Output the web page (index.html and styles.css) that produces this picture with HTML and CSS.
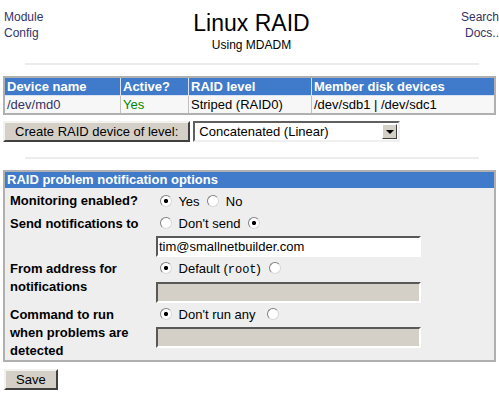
FILE: index.html
```html
<!DOCTYPE html>
<html lang="en">
<head>
    <meta charset="UTF-8">
    <title>Linux RAID</title>
    <link rel="stylesheet" href="styles.css">
</head>
<body>
    <div class="header">
        <div class="links-left">
            <a href="#">Module<br>Config</a>
        </div>
        <div class="title">
            <h1>Linux RAID</h1>
            <div class="subtitle">Using MDADM</div>
        </div>
        <div class="links-right">
            <a href="#">Search<br>Docs..</a>
        </div>
    </div>
    <hr>

    <table class="devices">
        <tr class="head">
            <td class="c1">Device name</td>
            <td class="c2">Active?</td>
            <td class="c3">RAID level</td>
            <td class="c4">Member disk devices</td>
        </tr>
        <tr class="row">
            <td><a href="#">/dev/md0</a></td>
            <td class="yes">Yes</td>
            <td>Striped (RAID0)</td>
            <td>/dev/sdb1 | /dev/sdc1</td>
        </tr>
    </table>

    <form class="create">
        <button type="button" class="btn">Create RAID device of level:</button>
        <div class="select">
            <span class="select-text">Concatenated (Linear)</span>
            <span class="select-arrow"><span class="tri"></span></span>
        </div>
    </form>
    <hr class="hr2">

    <table class="options">
        <tr class="head">
            <td colspan="2">RAID problem notification options</td>
        </tr>
        <tr class="first">
            <td class="label">Monitoring enabled?</td>
            <td class="field">
                <span class="radio on"></span> Yes <span class="radio"></span> No
            </td>
        </tr>
        <tr>
            <td class="label">Send notifications to</td>
            <td class="field">
                <span class="radio"></span> Don't send <span class="radio on"></span>
                <div class="text">tim@smallnetbuilder.com</div>
            </td>
        </tr>
        <tr>
            <td class="label">From address for notifications</td>
            <td class="field">
                <span class="radio on"></span> Default (<code>root</code>) <span class="radio"></span>
                <div class="text off"></div>
            </td>
        </tr>
        <tr>
            <td class="label">Command to run when problems are detected</td>
            <td class="field">
                <span class="radio on"></span> Don't run any &nbsp;<span class="radio"></span>
                <div class="text off"></div>
            </td>
        </tr>
    </table>

    <button type="button" class="btn save">Save</button>
</body>
</html>
```

FILE: styles.css
```css
body {
    font-family: 'Liberation Sans', Arial, sans-serif;
    font-size: 13px;
    margin: 0;
    padding: 0 3px;
    background-color: #fff;
    color: #000;
}

a {
    color: #333366;
    text-decoration: none;
}

.header {
    display: flex;
    justify-content: space-between;
    height: 63px;
}

.links-left, .links-right {
    width: 60px;
    font-size: 12px;
    line-height: 16px;
    padding-top: 9px;
}

.links-left {
    margin-left: 1px;
}

.links-right {
    text-align: right;
    margin-right: -3px;
}

.title {
    text-align: center;
    padding-top: 10px;
}

.title h1 {
    font-size: 23px;
    font-weight: normal;
    margin: 0;
    line-height: 26px;
}

.subtitle {
    font-size: 12px;
    margin-top: 2px;
}

hr {
    border: none;
    border-top: 2px solid #ececec;
    margin: 0 17px 0 22px;
}

.devices, .options {
    width: 493px;
    border-collapse: collapse;
    border: 2px solid #b0b0b0;
    margin-top: 11px;
}

.devices td {
    border: 1px solid #c0c0c0;
    padding: 0 2px;
    height: 17px;
}

.head td {
    background-color: #3f7bca;
    color: #fff;
    font-weight: bold;
    border-color: #d8e2f0;
}

.row td {
    background-color: #f7f7f7;
}

.c1 { width: 111px; }
.c2 { width: 63px; }
.c3 { width: 118px; }

.yes {
    color: #008800;
}

.create {
    display: flex;
    align-items: center;
    margin: 6px 0 0 0;
}

.btn {
    font-family: 'Liberation Sans', Arial, sans-serif;
    font-size: 13px;
    color: #000;
    background-color: #d4d0c8;
    border: 2px solid;
    border-color: #f4f2ee #404040 #404040 #f4f2ee;
    padding: 0 10px;
    height: 21px;
}

.select {
    display: flex;
    align-items: center;
    width: 203px;
    height: 17px;
    margin-left: 3px;
    border: 2px solid;
    border-color: #606060 #f0f0f0 #f0f0f0 #606060;
    background-color: #fff;
}

.select-text {
    flex: 1;
    padding-left: 4px;
}

.select-arrow {
    width: 13px;
    height: 13px;
    margin-right: 1px;
    background-color: #d4d0c8;
    border: 1px solid;
    border-color: #fff #404040 #404040 #fff;
    display: flex;
    align-items: center;
    justify-content: center;
}

.tri {
    border-left: 4px solid transparent;
    border-right: 4px solid transparent;
    border-top: 4px solid #000;
}

.hr2 {
    margin-top: 15px;
}

.options {
    background-color: #eeeeee;
    margin-top: 11px;
}

.options .head td {
    height: 16px;
    padding: 0 2px;
}

.options td {
    vertical-align: top;
}

.label {
    width: 136px;
    font-weight: bold;
    line-height: 18px;
    padding: 3px 8px 0 5px;
}

.field {
    line-height: 20px;
    padding: 2px 2px 0 2px;
}

.first td {
    padding-top: 4px;
}

.radio {
    display: inline-block;
    width: 10px;
    height: 10px;
    border-radius: 50%;
    border: 1px solid;
    border-color: #808080 #d8d8d8 #d8d8d8 #808080;
    background-color: #fff;
    vertical-align: -1px;
    margin: 0 3px 0 4px;
}

.radio.on {
    background: radial-gradient(circle, #000 0 1.8px, #fff 2.4px);
}

code {
    font-family: 'Liberation Mono', monospace;
    font-size: 12px;
}

.text {
    width: 260px;
    height: 17px;
    line-height: 17px;
    border: 2px solid;
    border-color: #585858 #fff #fff #585858;
    background-color: #fff;
    padding-left: 1px;
    margin: 2px 0 0 0;
}

.text.off {
    background-color: #d4d0c8;
}

.save {
    margin-top: 7px;
    margin-left: 1px;
    padding: 0 10px;
}
```
